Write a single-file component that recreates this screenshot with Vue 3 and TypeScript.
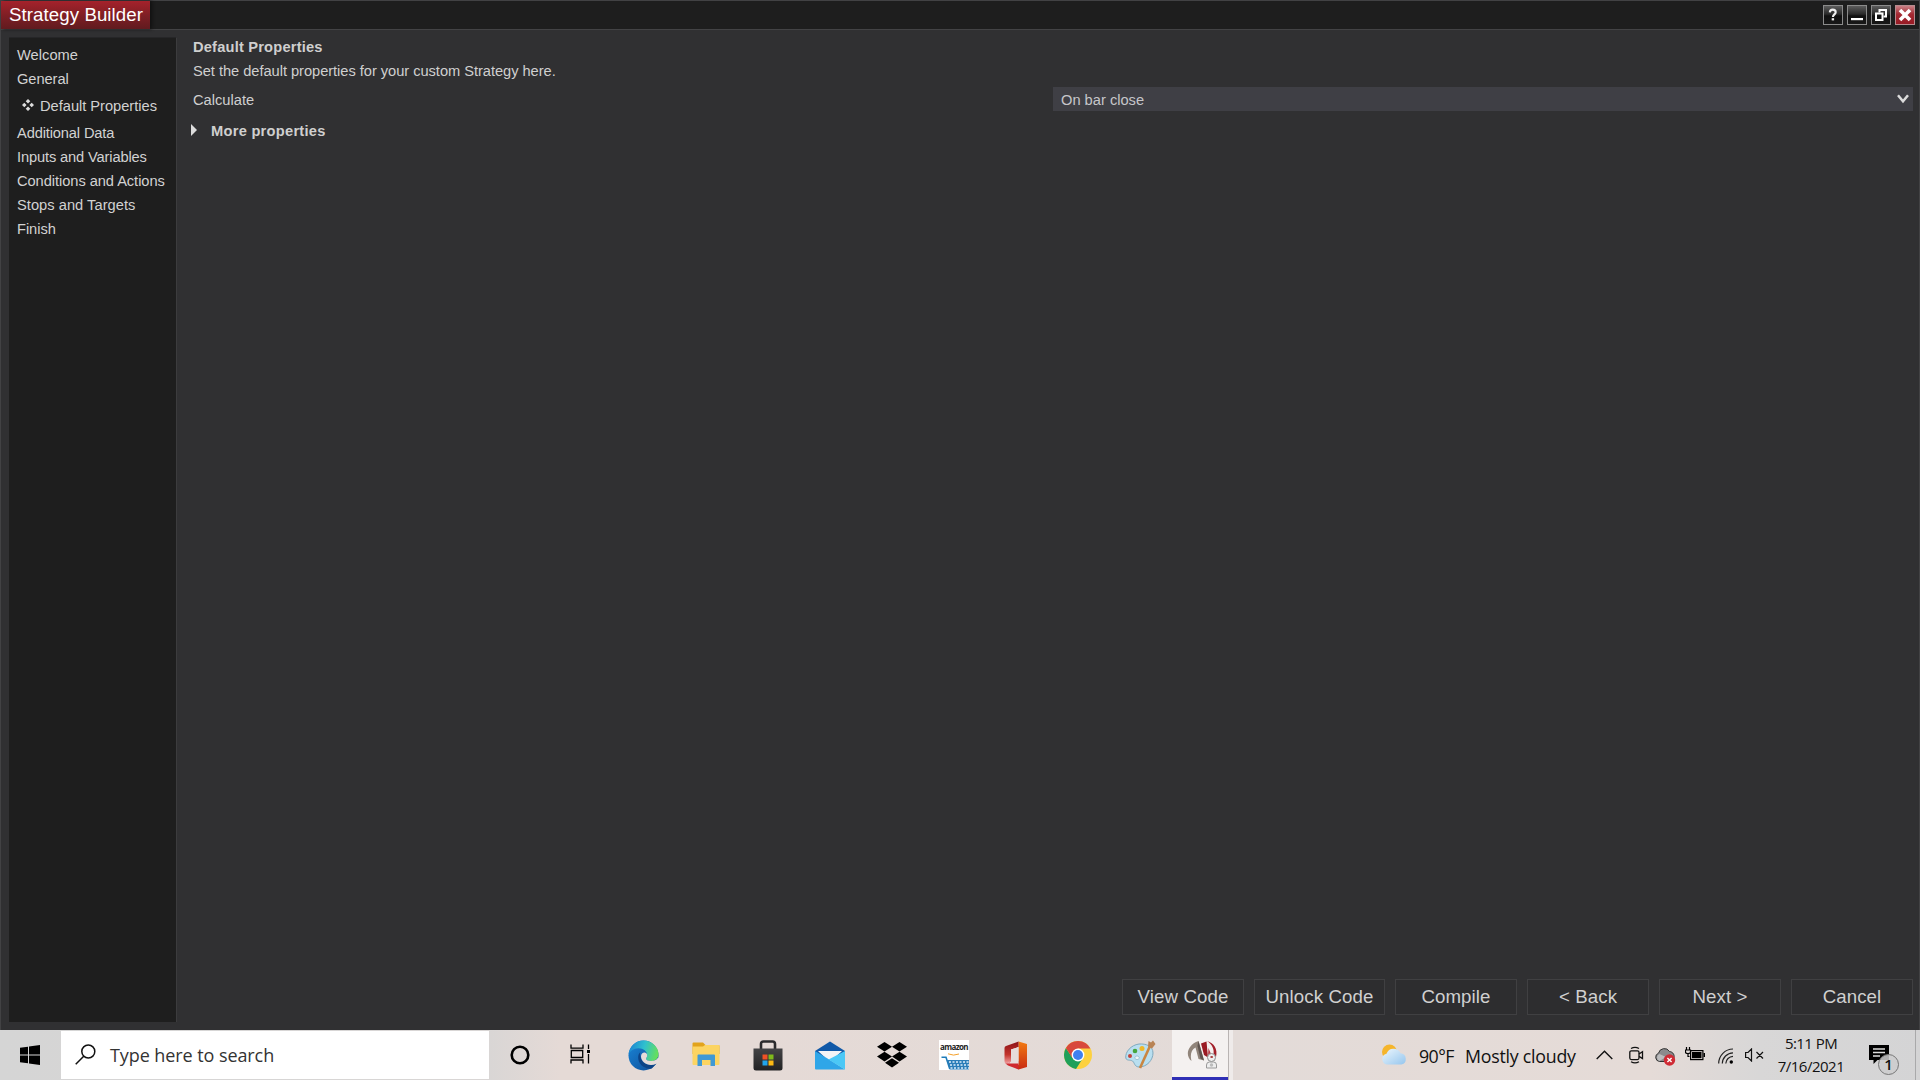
<script setup lang="ts">
interface NavItem {
  label: string
  sub?: boolean
  fit?: 'wide' | 'tight'
}

const navItems: NavItem[] = [
  { label: 'Welcome', fit: 'wide' },
  { label: 'General' },
  { label: 'Default Properties', sub: true },
  { label: 'Additional Data', fit: 'tight' },
  { label: 'Inputs and Variables', fit: 'tight' },
  { label: 'Conditions and Actions' },
  { label: 'Stops and Targets', fit: 'wide' },
  { label: 'Finish' },
]

const actions: string[] = ['View Code', 'Unlock Code', 'Compile', '< Back', 'Next >', 'Cancel']
</script>

<template>
  <div class="screen">
    <div class="window">
      <header class="titlebar">
        <div class="title">Strategy Builder</div>
        <div class="window-buttons">
          <button class="wbtn" aria-label="Help">
            <svg width="20" height="20" viewBox="0 0 20 20">
              <path d="M6.8 7.4C6.9 5.3 8.100 4.600 9.700 4.600C11.500 4.600 12.700 5.600 12.700 7.200C12.700 9.300 9.900 9.500 9.900 12" fill="none" stroke="#eee" stroke-width="2.100" />
              <rect x="8.700" y="13.200" width="2.400" height="2.200" fill="#eee" />
            </svg>
          </button>
          <button class="wbtn" aria-label="Minimize">
            <svg width="20" height="20" viewBox="0 0 20 20"><rect x="4" y="13" width="12" height="2.200" fill="#fff" /></svg>
          </button>
          <button class="wbtn" aria-label="Restore">
            <svg width="20" height="20" viewBox="0 0 20 20" fill="none" stroke="#fff" stroke-width="2">
              <path d="M8.500 7.500V5H15V11.500H12.500" />
              <rect x="5" y="8.500" width="6.500" height="6.500" />
            </svg>
          </button>
          <button class="wbtn close" aria-label="Close">
            <svg width="20" height="20" viewBox="0 0 20 20"><path d="M5 5L15 15M15 5L5 15" stroke="#fff" stroke-width="3.600" /></svg>
          </button>
        </div>
      </header>

      <div class="body">
        <nav class="sidebar">
          <div v-for="item in navItems" :key="item.label" class="nav-item" :class="[item.fit, { sub: item.sub }]">
            <svg v-if="item.sub" class="bullet" width="12" height="12" viewBox="0 0 12 12" fill="#ddd">
              <path d="M6 0L8.300 2.300L6 4.600L3.700 2.300ZM6 7.400L8.300 9.700L6 12L3.700 9.700ZM2.300 3.700L4.600 6L2.300 8.300L0 6ZM9.700 3.700L12 6L9.700 8.300L7.400 6Z" />
            </svg>
            <span>{{ item.label }}</span>
          </div>
        </nav>

        <main class="content">
          <h1 class="heading">Default Properties</h1>
          <p class="intro">Set the default properties for your custom Strategy here.</p>
          <div class="property">
            <label class="property-label">Calculate</label>
            <div class="select">
              <span>On bar close</span>
              <svg width="12" height="10" viewBox="0 0 12 10"><path d="M1 1.300L6 7.300L11 1.300" fill="none" stroke="#dcdcdc" stroke-width="2.500" /></svg>
            </div>
          </div>
          <div class="more">
            <svg width="6" height="12" viewBox="0 0 6 12"><path d="M0 0L6 6L0 12Z" fill="#dcdcdc" /></svg>
            <span>More properties</span>
          </div>
          <footer class="actions">
            <button v-for="a in actions" :key="a" class="action" :class="{ wide: a === 'Unlock Code' }">{{ a }}</button>
          </footer>
        </main>
      </div>
    </div>

    <div class="taskbar">
      <div class="start">
        <svg width="20" height="20" viewBox="0 0 20 20">
          <path d="M0 2.800L8 1.700V9.500H0ZM9 1.500L20 0V9.500H9ZM0 10.500H8V18.300L0 17.200ZM9 10.500H20V20L9 18.500Z" />
        </svg>
      </div>
      <div class="search">
        <svg width="21" height="21" viewBox="0 0 21 21" fill="none" stroke="#111" stroke-width="1.500">
          <circle cx="13.300" cy="7.500" r="6.500" />
          <path d="M8.700 12.200L.7 20.200" />
        </svg>
        <span>Type here to search</span>
      </div>

      <div class="apps">
        <div class="app">
          <svg width="20" height="20" viewBox="0 0 20 20"><circle cx="10" cy="10" r="8.300" fill="none" stroke="#000" stroke-width="2.600" /></svg>
        </div>
        <div class="app">
          <svg class="taskview" width="21" height="20" viewBox="0 0 21 20" fill="none" stroke="#000" stroke-width="1.300">
            <path d="M1 .5V4.200H13V.5M1 19.500V16H13V19.500M1.300 6.500H12.700V13.500H1.300ZM18.500 .5V5M18.500 10V19.500" />
            <rect x="17" y="6" width="3" height="3" fill="#000" stroke="none" />
          </svg>
        </div>
        <div class="app">
          <svg class="edge" width="31" height="31" viewBox="0 0 31 31">
            <defs>
              <linearGradient id="edgeTop" x1="0" y1=".3" x2="1" y2=".5">
                <stop offset="0" stop-color="#1c83d2" /><stop offset=".5" stop-color="#2fc0cf" /><stop offset="1" stop-color="#66e05a" />
              </linearGradient>
              <linearGradient id="edgeLow" x1="0" y1="0" x2="1" y2="1">
                <stop offset="0" stop-color="#1a86d8" /><stop offset="1" stop-color="#0d4b95" />
              </linearGradient>
            </defs>
            <circle cx="15.500" cy="15.500" r="15" fill="url(#edgeLow)" />
            <path d="M.6 14.500C1.500 6 8 .5 15.500 .5C24 .5 30.500 7 30.500 14C30.500 18.500 27 21 23.500 21C20.500 21 18 20 18 18.700C18 17.800 19.200 17.300 19.200 15.200C19.200 11.500 15.500 8.200 10.500 8.200C5.500 8.200 1.600 11.500 .6 14.500Z" fill="url(#edgeTop)" />
            <path d="M12.200 12.300C9 15 9.300 23 15.500 26.800C18.500 28.600 22.500 29.500 24 28.200L28.500 23.500C25 25.700 20.500 25.600 17.500 23.800C13.500 21.300 11.500 16.500 12.200 12.300Z" fill="#0c4386" />
            <path d="M13 16.500C13 13.500 15 12.300 16.800 12.500C18.700 12.800 19.200 14.500 19.200 15.200C19.200 17.300 18 17.800 18 18.700C18 20 20.500 21 23.500 21C26 21 28.300 20 29.500 18.300L31 17.500V22C30 22.800 29 23.400 28.300 23.700C21 27.500 13.200 22.500 13 16.500Z" fill="#e5dcd9" />
          </svg>
        </div>
        <div class="app">
          <svg class="explorer" width="28" height="24" viewBox="0 0 28 24">
            <path d="M.5 1.500Q.5 .5 1.500 .5H11L13.500 3H26.500Q27.500 3 27.500 4V12H.5Z" fill="#e2a31c" />
            <path d="M.5 4.500H11L13 3H26.500Q27.500 3 27.500 4V22Q27.500 23 26.500 23H1.500Q.5 23 .5 22Z" fill="#fcd462" />
            <path d="M5.500 24V13.500Q5.500 12.500 6.500 12.500H22Q23 12.500 23 13.500V24H18.500V18H10V24Z" fill="#4099d4" />
          </svg>
        </div>
        <div class="app">
          <svg class="store" width="30" height="31" viewBox="0 0 30 31">
            <defs><linearGradient id="storeBag" x1="0" y1="0" x2="0" y2="1"><stop offset="0" stop-color="#444446" /><stop offset="1" stop-color="#222224" /></linearGradient></defs>
            <path d="M8 9V4Q8 1.500 10.500 1.500H19.500Q22 1.500 22 4V9" fill="none" stroke="#2b2b2d" stroke-width="2.600" />
            <path d="M.5 8.500H29.500V28Q29.500 30.500 27 30.500H3Q.5 30.500 .5 28Z" fill="url(#storeBag)" />
            <rect x="9.500" y="14.500" width="5" height="5" fill="#f05125" /><rect x="15.500" y="14.500" width="5" height="5" fill="#7fba1b" />
            <rect x="9.500" y="20.500" width="5" height="5" fill="#22a5ec" /><rect x="15.500" y="20.500" width="5" height="5" fill="#fdb913" />
          </svg>
        </div>
        <div class="app">
          <svg width="30" height="29" viewBox="0 0 30 29">
            <path d="M0 10L15 .5L30 10V16H0Z" fill="#1159a8" />
            <path d="M3 10H27L15 21Z" fill="#f4f4f6" />
            <path d="M0 10L15 19L30 28.500H1Q0 28.500 0 27.500Z" fill="#2fa6e8" />
            <path d="M30 10V27.500L30 28.500L13.500 18.500Z" fill="#4bc8f6" />
          </svg>
        </div>
        <div class="app">
          <svg class="dropbox" width="30" height="26" viewBox="0 0 30 26">
            <path d="M7.500 0L15 4.800L7.500 9.600L0 4.800ZM22.500 0L30 4.800L22.500 9.600L15 4.800ZM7.500 9.800L15 14.600L7.500 19.400L0 14.600ZM22.500 9.800L30 14.600L22.500 19.400L15 14.600ZM15 16.200L22 20.700L15 25.600L8 20.700Z" />
          </svg>
        </div>
        <div class="app">
          <div class="amazon">
            <span>amazon</span>
            <svg width="30" height="17" viewBox="0 0 30 17">
              <path d="M9 .8Q14.500 3.300 20 1" fill="none" stroke="#f5a12c" stroke-width="1" />
              <path d="M2.500 4.200H7L10.800 16" fill="none" stroke="#1f7cb8" stroke-width="1.600" />
              <path d="M8 7H30V16.500H10.800Z" fill="#2a7db8" />
              <path d="M10 9H30M11 12H30M11.500 15H30" stroke="#dceefa" stroke-width="1.700" stroke-dasharray="2 1.500" />
            </svg>
          </div>
        </div>
        <div class="app">
          <svg width="24" height="29" viewBox="0 0 24 29">
            <defs>
              <linearGradient id="officeL" x1="0" y1="0" x2="0" y2="1"><stop offset="0" stop-color="#8c1218" /><stop offset=".6" stop-color="#c3342c" /><stop offset="1" stop-color="#f0a0a0" /></linearGradient>
              <linearGradient id="officeR" x1="0" y1="0" x2="0" y2="1"><stop offset="0" stop-color="#f27b12" /><stop offset="1" stop-color="#c92b12" /></linearGradient>
            </defs>
            <path d="M14.500 .5L23 3V26L14.500 28.500L8 24H14.500Z" fill="url(#officeR)" />
            <path d="M14.500 .5V6L7 8.500V20L1.500 22.500Q.5 21.500 .5 20V7Q.5 5.500 2 5Z" fill="url(#officeL)" />
            <path d="M1.500 22.500L7 20H14.500V28.500L4 24.500Z" fill="#cf2a2f" />
            <path d="M7 8.500L14.500 6V22.500H5L7 20Z" fill="#e6dddb" />
            <path d="M1 22.500L7 20L5 22.500H4.500Z" fill="#f0a9ac" />
          </svg>
        </div>
        <div class="app">
          <svg class="chrome" width="28" height="28" viewBox="0 0 28 28">
            <circle cx="14" cy="14" r="14" fill="#fdd13f" />
            <path d="M1.900 7A14 14 0 0 0 12 27.900L19 17L8.500 17Z" fill="#1fa05a" />
            <path d="M14 7.500H26.400A14 14 0 0 0 1.900 7L8.300 17Z" fill="#d8483c" />
            <circle cx="14" cy="14" r="6.400" fill="#fff" /><circle cx="14" cy="14" r="5" fill="#3f80f0" />
          </svg>
        </div>
        <div class="app">
          <svg class="paint" width="31" height="29" viewBox="0 0 31 29">
            <path d="M14 4C6 5 0 12 .8 18C1.500 21 5 19.500 7.500 21C10 23 9 26.500 14 27C22 27 28 20 28 13C28 6 21 3.500 14 4Z" fill="#b9dff0" stroke="#7fa9bf" />
            <path d="M12 16a2.200 1.800 0 1 0 .1 0Z" fill="#eef5f8" stroke="#7fa9bf" stroke-width=".6" />
            <circle cx="5" cy="16" r="2" fill="#c2443c" /><circle cx="10" cy="11" r="2.300" fill="#46a53e" /><circle cx="17" cy="8.500" r="2.500" fill="#f0b829" />
            <path d="M25 6L15 28" stroke="#c98642" stroke-width="2.600" />
            <path d="M23 6.500L23.500 1L26 2.500L28 .5L30.500 4L27 8.500Z" fill="#b98354" />
          </svg>
        </div>
        <div class="app active">
          <svg class="ninja" width="32" height="29" viewBox="0 0 32 29">
            <path d="M5.500 21C-1 16 1 5 12.500 1L18 20.500L12.500 19L9.500 7.500C5 10 4 15 5.500 21Z" fill="#91857b" />
            <path d="M12.500 1L18 20.500L14.500 18.500L11.500 6Z" fill="#5f5550" />
            <path d="M15 3.500L20.500 1.500L22 17.500L18 15Z" fill="#9a1a23" />
            <path d="M21 1C28 3 32 9 30 17L27.500 14.500C28.500 9 26 4.500 21 1Z" fill="#a3202a" />
            <path d="M22.500 8L25 14L22 16Z" fill="#b53a42" />
            <circle cx="25.500" cy="17.500" r="4" fill="#eee" stroke="#8e8e8e" />
            <path d="M20.500 28V25Q20.500 22 23.500 22H27.500Q30.500 22 30.500 25V28Z" fill="#eee" stroke="#999" />
            <path d="M24.500 17H26.800" stroke="#a44" stroke-width="2" /><circle cx="25.500" cy="25" r="1.700" fill="#bbb" />
          </svg>
        </div>
      </div>

      <div class="weather">
        <svg width="27" height="22" viewBox="0 0 27 22">
          <defs><linearGradient id="cloud" x1="0" y1="0" x2="1" y2="1"><stop offset="0" stop-color="#eef7fd" /><stop offset="1" stop-color="#95c6ee" /></linearGradient></defs>
          <circle cx="8.500" cy="8" r="7.500" fill="#f5b52c" />
          <path d="M6 20.500A5.500 5.500 0 0 1 5.500 9.700A7.500 7.500 0 0 1 19.500 9.300A5.700 5.700 0 0 1 20.500 20.500Z" fill="url(#cloud)" />
        </svg>
        <span class="temp">90°F</span>
        <span class="sky">Mostly cloudy</span>
      </div>

      <div class="tray">
        <svg width="17" height="10" viewBox="0 0 17 10"><path d="M.7 9L8.500 1.200L16.300 9" fill="none" stroke="#111" stroke-width="1.400" /></svg>
        <svg class="meet" width="15" height="18" viewBox="0 0 15 18" fill="none" stroke="#111" stroke-width="1.300">
          <rect x=".8" y="4.800" width="9.200" height="8.800" rx="1.500" />
          <path d="M10 8L13.500 5.800V12.600L10 10.400M2 2.500Q6 .2 10 2.500M2 15.800Q6 18 10 15.800" />
        </svg>
        <svg class="onedrive" width="21" height="19" viewBox="0 0 21 19">
          <path d="M4.500 14.500A4.300 4.300 0 0 1 3.500 6.200A6 6 0 0 1 14.500 4.500A5 5 0 0 1 18.500 12V14.500Z" fill="#8b8b8d" stroke="#333" />
          <path d="M4.500 14A3.700 3.700 0 0 1 4.500 7L11 10Z" fill="#bcbcbe" />
          <circle cx="14.500" cy="13" r="5.700" fill="#cf2b35" />
          <path d="M12.400 10.900L16.600 15.100M16.600 10.900L12.400 15.100" stroke="#fff" stroke-width="1.400" />
        </svg>
        <svg class="battery" width="20" height="15" viewBox="0 0 20 15">
          <path d="M1.500 0V3M4.500 0V3M.5 3H5.500V5Q5.500 6.500 3 6.500Q.5 6.500 .5 5ZM3 6.500V9.500H4.500" fill="none" stroke="#000" stroke-width="1.200" />
          <rect x="5.600" y="3.600" width="12.300" height="9" fill="none" stroke="#000" stroke-width="1.200" />
          <rect x="7" y="5" width="9.500" height="6.200" /><rect x="18.500" y="6" width="1.500" height="4" />
        </svg>
        <svg class="wifi" width="16" height="16" viewBox="0 0 16 16" fill="none" stroke="#222" stroke-width="1.200">
          <path d="M.7 15.500A14.500 14.500 0 0 1 15 1M4.300 15.500A11 11 0 0 1 15 4.800M7.800 15.500A7.500 7.500 0 0 1 15 8.300" />
          <circle cx="13.300" cy="14" r="1.700" fill="#000" stroke="none" />
        </svg>
        <svg class="volume" width="19" height="14" viewBox="0 0 19 14" fill="none" stroke="#111" stroke-width="1.200">
          <path d="M.6 4.500H3L6.500 1V13L3 9.500H.6ZM11.500 4L18 10.500M18 4L11.500 10.500" />
        </svg>
      </div>

      <div class="clock">
        <span class="time">5:11 PM</span>
        <span class="date">7/16/2021</span>
      </div>
      <div class="notifications">
        <svg width="20" height="20" viewBox="0 0 20 20">
          <path d="M0 0H20V15H8.500L4.500 19V15H0Z" />
          <path d="M4 4H16M4 7.500H16M4 11H11" stroke="#ddd" stroke-width="1.300" />
        </svg>
        <span class="badge">1</span>
      </div>
      <div class="show-desktop"></div>
    </div>
  </div>
</template>

<style>
body {
  margin: 0;
  overflow: hidden;
}
</style>

<style scoped>
.screen {
  width: 1920px;
  height: 1080px;
  display: flex;
  flex-direction: column;
  overflow: hidden;
  font-family: "Liberation Sans", Arial, sans-serif;
  background: #303032;
}
svg {
  display: block;
  flex: none;
}
button {
  font: inherit;
  padding: 0;
  margin: 0;
}
.window {
  box-sizing: border-box;
  height: 1030px;
  display: flex;
  flex-direction: column;
  border: 1px solid #424244;
  border-bottom: 0;
  background: #303032;
}
.titlebar {
  box-sizing: border-box;
  height: 29px;
  display: flex;
  justify-content: space-between;
  background: #1e1e1e;
  border-bottom: 1px solid #434345;
}
.title {
  box-sizing: border-box;
  width: 149px;
  height: 28px;
  padding-left: 8px;
  line-height: 27px;
  font-size: 18.67px;
  letter-spacing: 0.08px;
  white-space: nowrap;
  color: #fff;
  background: linear-gradient(#a5222b, #7c1e24 55%, #611b1f);
  box-shadow: 2px 0 3px #111;
}
.window-buttons {
  display: flex;
  gap: 4px;
  padding: 4px 4px 0 0;
}
.wbtn {
  box-sizing: border-box;
  width: 20px;
  height: 20px;
  border: 1px solid #8b8b8b;
  background: linear-gradient(#5c5c5c, #2a2a2a 45%, #101010 55%, #181818);
}
.wbtn svg {
  margin: -1px;
}
.wbtn.close {
  border-color: #b58b8e;
  background: linear-gradient(#c98085, #a52a33 45%, #981a24);
}
.body {
  flex: 1;
  display: flex;
  padding: 7px 6px 8px 8px;
}
.sidebar {
  box-sizing: border-box;
  width: 168px;
  padding: 5px 0 0 8px;
  background: #1e1e1e;
  border-top: 1px solid #262628;
  border-right: 1px solid #3c3c3e;
}
.nav-item {
  height: 24px;
  display: flex;
  align-items: center;
  line-height: 24px;
  font-size: 14.67px;
  letter-spacing: -0.06px;
  white-space: nowrap;
  color: #d2d2d2;
}
.nav-item.wide {
  letter-spacing: 0.03px;
}
.nav-item.tight {
  letter-spacing: -0.14px;
}
.nav-item.sub {
  height: 30px;
  padding-left: 5px;
  letter-spacing: -0.02px;
}
.bullet {
  margin: -2px 6px 0 0;
}
.content {
  flex: 1;
  display: flex;
  flex-direction: column;
  margin-top: -2px;
  padding-left: 16px;
  font-size: 14.67px;
  color: #cfcfcf;
}
.heading,
.intro {
  margin: 0;
  font-size: 14.67px;
  line-height: 24px;
}
.heading {
  letter-spacing: 0.19px;
}
.intro {
  letter-spacing: -0.04px;
}
.property {
  height: 24px;
  margin-top: 4px;
  display: flex;
  line-height: 26px;
}
.property-label {
  flex: 1;
}
.select {
  box-sizing: border-box;
  width: 860px;
  height: 24px;
  display: flex;
  justify-content: space-between;
  padding: 0 4px 0 8px;
  color: #c6c6ca;
  background: #3f3f45;
}
.select svg {
  margin-top: 7px;
}
.more {
  display: flex;
  align-items: center;
  margin: 8px 0 0 -2px;
  gap: 14px;
  line-height: 24px;
  font-weight: bold;
  letter-spacing: 0.26px;
}
.more svg {
  margin-top: -2px;
}
.actions {
  display: flex;
  justify-content: flex-end;
  gap: 10px;
  margin-top: auto;
  padding-bottom: 7px;
}
.action {
  box-sizing: border-box;
  width: 122px;
  height: 36px;
  font-size: 18.67px;
  line-height: 34px;
  letter-spacing: 0.1px;
  white-space: nowrap;
  color: #d0d0d0;
  background: #2d2d2f;
  border: 1px solid #404042;
}
.action.wide {
  width: 131px;
}

.taskbar {
  height: 50px;
  display: flex;
  font-family: "Open Sans", "Noto Sans", sans-serif;
  color: #111;
  background: linear-gradient(90deg, #d5d5d5 0, #d9d6d5 490px, #e5dad6 560px, #e5dad6 750px, #e3dbd8 1250px, #e5dbd7 1650px, #d8d7d7 1760px, #d4d4d5 1920px);
}
.start {
  box-sizing: border-box;
  width: 61px;
  padding-right: 1px;
  display: flex;
  align-items: center;
  justify-content: center;
}
.search {
  box-sizing: border-box;
  width: 428px;
  height: 48px;
  margin-top: 1px;
  display: flex;
  align-items: center;
  gap: 14px;
  padding-left: 14px;
  font-size: 18px;
  letter-spacing: -0.08px;
  color: #333;
  background: #fff;
}
.search svg {
  margin-top: -2px;
}
.apps {
  display: flex;
}
.app {
  width: 62px;
  display: flex;
  align-items: center;
  justify-content: center;
}
.taskview {
  margin: -2px 0 0 -3px;
}
.edge,
.store,
.chrome {
  margin-left: -1px;
}
.explorer {
  margin: -2px 0 0 -1px;
}
.dropbox,
.paint {
  margin-top: -1px;
}
.ninja {
  margin: -2px 0 0 3px;
}
.amazon {
  width: 30px;
  height: 30px;
  display: flex;
  flex-direction: column;
  align-items: center;
  justify-content: flex-end;
  background: #fff;
}
.amazon span {
  height: 10px;
  font: bold 8px/8px "Open Sans", sans-serif;
  letter-spacing: -0.6px;
  color: #222;
}
.app.active {
  box-sizing: border-box;
  width: 57px;
  margin-left: 1px;
  background: #f4f1f0;
  border-right: 1px solid #b9b4b3;
  box-shadow: inset 0 -3px #2f2fb5, 4px 0 #efebea;
}
.weather {
  display: flex;
  align-items: center;
  margin-left: 152px;
  font-size: 17.8px;
  white-space: nowrap;
}
.temp {
  width: 35px;
  margin: 2px 11px 0 11px;
  letter-spacing: -0.6px;
}
.sky {
  width: 111px;
  margin-top: 2px;
  letter-spacing: -0.24px;
}
.tray {
  display: flex;
  align-items: center;
  margin-left: 20px;
}
.meet {
  margin-left: 16px;
}
.onedrive {
  margin: 2px 0 0 11px;
}
.battery {
  margin: -2px 0 0 9px;
}
.wifi {
  margin: 1px 0 0 13px;
}
.volume {
  margin: -1px 0 0 11px;
}
.clock {
  width: 80px;
  margin-left: 7px;
  padding-top: 2px;
  display: flex;
  flex-direction: column;
  align-items: center;
  font-size: 15px;
  line-height: 23px;
  white-space: nowrap;
}
.time {
  letter-spacing: -0.55px;
}
.date {
  letter-spacing: -0.5px;
}
.notifications {
  position: relative;
  width: 64px;
  padding: 15px 0 0 18px;
  box-sizing: border-box;
}
.badge {
  position: absolute;
  left: 27px;
  top: 24px;
  box-sizing: border-box;
  width: 21px;
  height: 21px;
  border: 1px solid #777;
  border-radius: 50%;
  font-size: 15px;
  font-weight: 600;
  line-height: 19px;
  text-align: center;
  background: rgba(205, 205, 206, 0.85);
}
.show-desktop {
  flex: 1;
  border-left: 1px solid #a9a9aa;
}
</style>
